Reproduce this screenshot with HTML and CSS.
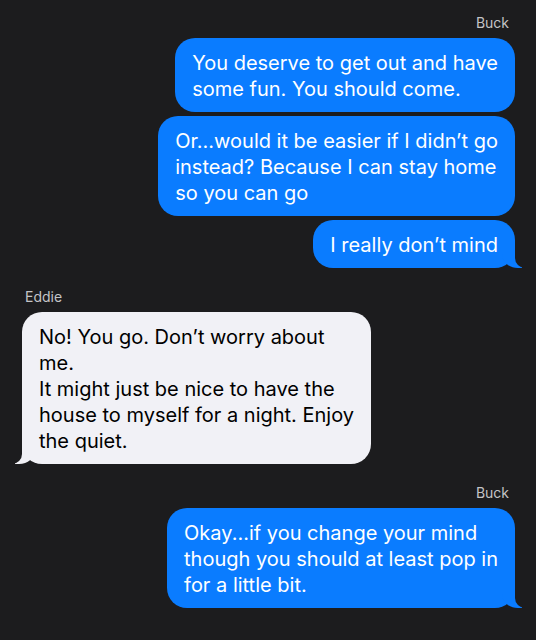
FILE: index.html
```html
<!DOCTYPE html>
<html>
<head>
    <title>Messages</title>
    <link rel="stylesheet" href="styles.css">
</head>
<body>
    <div class="chat">
        <div class="group sent">
            <div class="name">Buck</div>
            <div class="bubble">You deserve to get out and have<br>some fun. You should come.</div>
            <div class="bubble">Or...would it be easier if I didn’t go<br>instead? Because I can stay home<br>so you can go</div>
            <div class="bubble tail">I really don’t mind</div>
        </div>

        <div class="group received">
            <div class="name">Eddie</div>
            <div class="bubble tail">No! You go. Don’t worry about<br>me.<br>It might just be nice to have the<br>house to myself for a night. Enjoy<br>the quiet.</div>
        </div>

        <div class="group sent">
            <div class="name">Buck</div>
            <div class="bubble tail">Okay...if you change your mind<br>though you should at least pop in<br>for a little bit.</div>
        </div>
    </div>
</body>
</html>
```

FILE: styles.css
```css
body {
    margin: 0;
    background-color: #1c1c1e;
    font-family: Inter, "Noto Sans", sans-serif;
}

.chat {
    padding: 14px 21px 0 22px;
}

.group {
    display: flex;
    flex-direction: column;
    gap: 4px;
    margin-bottom: 20px;
}

.sent {
    align-items: flex-end;
}

.received {
    align-items: flex-start;
}

.name {
    font-size: 14px;
    line-height: 17px;
    color: #c4c4c6;
    margin-bottom: 3px;
}

.sent .name {
    margin-right: 6px;
}

.received .name {
    margin-left: 3px;
}

.bubble {
    position: relative;
    padding: 12px 17px 10px;
    border-radius: 20px;
    font-size: 20px;
    line-height: 26px;
    white-space: nowrap;
}

.sent .bubble {
    background-color: #0a7cff;
    color: #ffffff;
}

.received .bubble {
    background-color: #f1f1f6;
    color: #000000;
}

/* the little tail on the last bubble */
.bubble.tail::before,
.bubble.tail::after {
    content: "";
    position: absolute;
    bottom: 0;
    height: 25px;
}

.sent .bubble.tail::before {
    right: -7px;
    width: 20px;
    background-color: #0a7cff;
    border-bottom-left-radius: 16px 14px;
}

.sent .bubble.tail::after {
    right: -26px;
    width: 26px;
    background-color: #1c1c1e;
    border-bottom-left-radius: 10px;
}

.received .bubble.tail::before {
    left: -7px;
    width: 20px;
    background-color: #f1f1f6;
    border-bottom-right-radius: 16px 14px;
}

.received .bubble.tail::after {
    left: -26px;
    width: 26px;
    background-color: #1c1c1e;
    border-bottom-right-radius: 10px;
}
```
